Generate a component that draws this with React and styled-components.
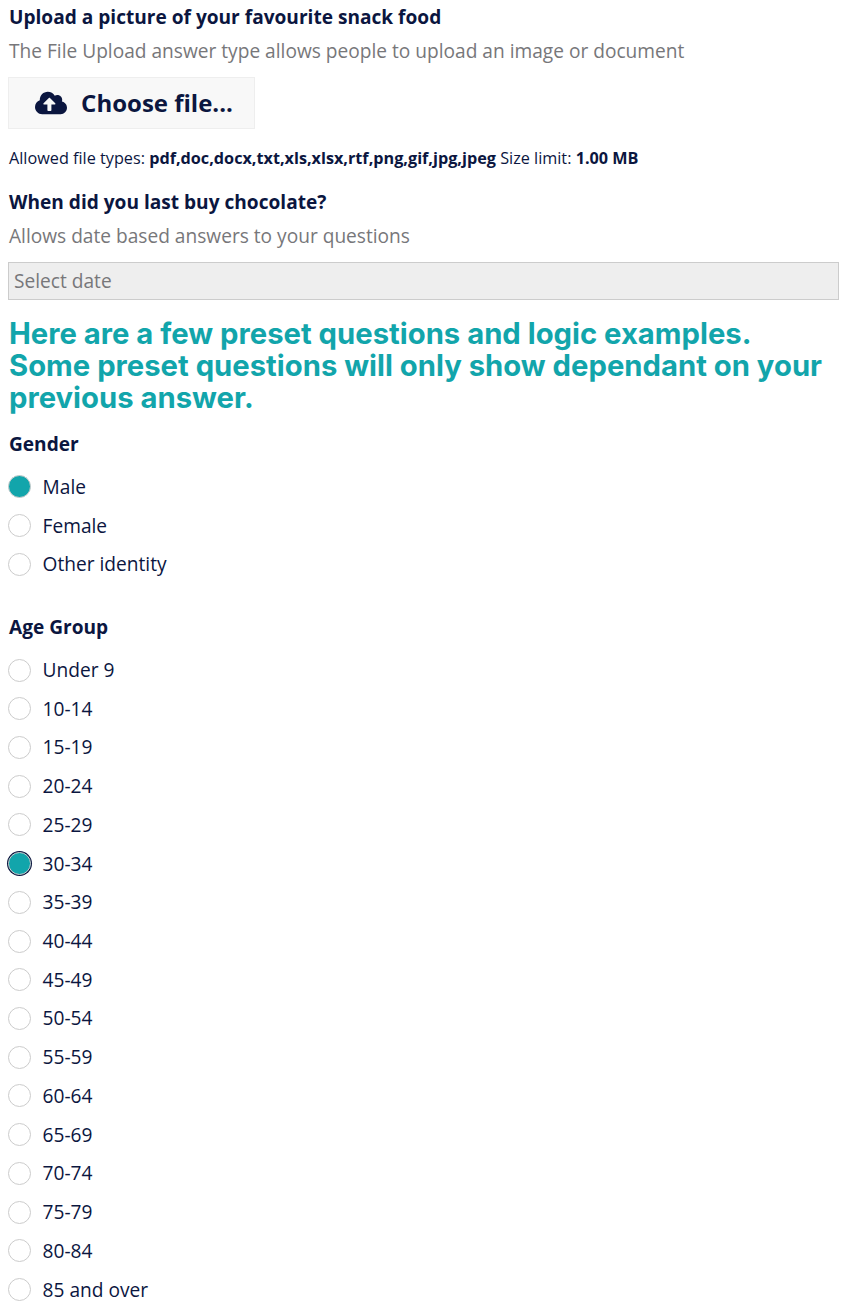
import styled, { createGlobalStyle } from "styled-components";
import { FaCloudUploadAlt } from "react-icons/fa";

const GENDERS = ["Male", "Female", "Other identity"];
const AGES = ["Under 9", "10-14", "15-19", "20-24", "25-29", "30-34", "35-39", "40-44", "45-49", "50-54", "55-59", "60-64", "65-69", "70-74", "75-79", "80-84", "85 and over"];

export default function App() {
  return (
    <Page>
      <GlobalStyle />
      <Label>Upload a picture of your favourite snack food</Label>
      <Help>The File Upload answer type allows people to upload an image or document</Help>
      <FileButton>
        <FaCloudUploadAlt size={32} />
        <span>Choose file...</span>
      </FileButton>
      <FileInfo>
        Allowed file types: <b>pdf,doc,docx,txt,xls,xlsx,rtf,png,gif,jpg,jpeg</b> Size limit: <b>1.00 MB</b>
      </FileInfo>
      <Label>When did you last buy chocolate?</Label>
      <Help>Allows date based answers to your questions</Help>
      <DateInput>Select date</DateInput>
      <Heading>
        Here are a few preset questions and logic examples.<br />
        Some preset questions will only show dependant on your<br />
        previous answer.
      </Heading>
      <RadioGroup title="Gender" options={GENDERS} selected="Male" />
      <Spacer />
      <RadioGroup title="Age Group" options={AGES} selected="30-34" focused />
    </Page>
  );
}

function RadioGroup({ title, options, selected, focused }) {
  return (
    <>
      <GroupLabel>{title}</GroupLabel>
      <Options>
        {options.map((o) => (
          <Option key={o}>
            <Radio $checked={o === selected} $focused={focused && o === selected} />
            {o}
          </Option>
        ))}
      </Options>
    </>
  );
}

const GlobalStyle = createGlobalStyle`
  html, body {
    margin: 0;
    background: #fff;
  }
  body {
    font-family: "Open Sans", sans-serif;
    color: #0b163f;
  }
`
const Page = styled.div`
  display: flex;
  flex-direction: column;
  align-items: flex-start;
  padding: 5px 11px 0 8px;
  height: 1305px;
  overflow: hidden;
`
const Label = styled.div`
  padding-left: 1px;
  font-size: 19.1px;
  font-weight: 700;
  line-height: 24px;
  margin-bottom: 1px;
`
const GroupLabel = styled(Label)`
  margin-bottom: 11.5px;
`
const Help = styled.div`
  padding-left: 1px;
  font-size: 19.14px;
  line-height: 26px;
  color: #77777a;
  margin-top: 8px;
`
const FileButton = styled.div`
  display: flex;
  align-items: center;
  justify-content: center;
  gap: 14px;
  box-sizing: border-box;
  width: 247px;
  height: 52px;
  margin-top: 13px;
  padding-left: 5px;
  background: #f8f8f8;
  border: 1px solid #eeeeee;
  font-size: 24px;
  font-weight: 700;

  span {
    margin-bottom: 2px;
  }
`
const FileInfo = styled.div`
  padding-left: 1px;
  font-size: 16.23px;
  line-height: 22px;
  margin: 18px 0 21px;
`
const DateInput = styled.div`
  box-sizing: border-box;
  width: 100%;
  height: 38px;
  margin-top: 13px;
  padding-left: 5px;
  background: #eeeeee;
  border: 1px solid #cccccc;
  font-size: 19.14px;
  line-height: 36px;
  color: #77777a;
`
const Heading = styled.h2`
  margin: 18px 0 18px;
  padding-left: 1px;
  font-family: "Inter", sans-serif;
  font-size: 29.25px;
  font-weight: 700;
  line-height: 32px;
  color: #12a5ab;
`
const Options = styled.div`
  display: flex;
  flex-direction: column;
`
const Option = styled.div`
  display: flex;
  align-items: center;
  gap: 11.6px;
  height: 38.72px;
  font-size: 19.14px;
`
const Radio = styled.span`
  box-sizing: border-box;
  width: 23px;
  height: 23px;
  border-radius: 50%;
  background: ${(p) => (p.$checked ? "#12a5ab" : "#fff")};
  border: 1px solid #cccccc;
  box-shadow: ${(p) => (p.$focused ? "0 0 0 1px #0b163f" : "none")};
`
const Spacer = styled.div`
  height: 31.5px;
`
